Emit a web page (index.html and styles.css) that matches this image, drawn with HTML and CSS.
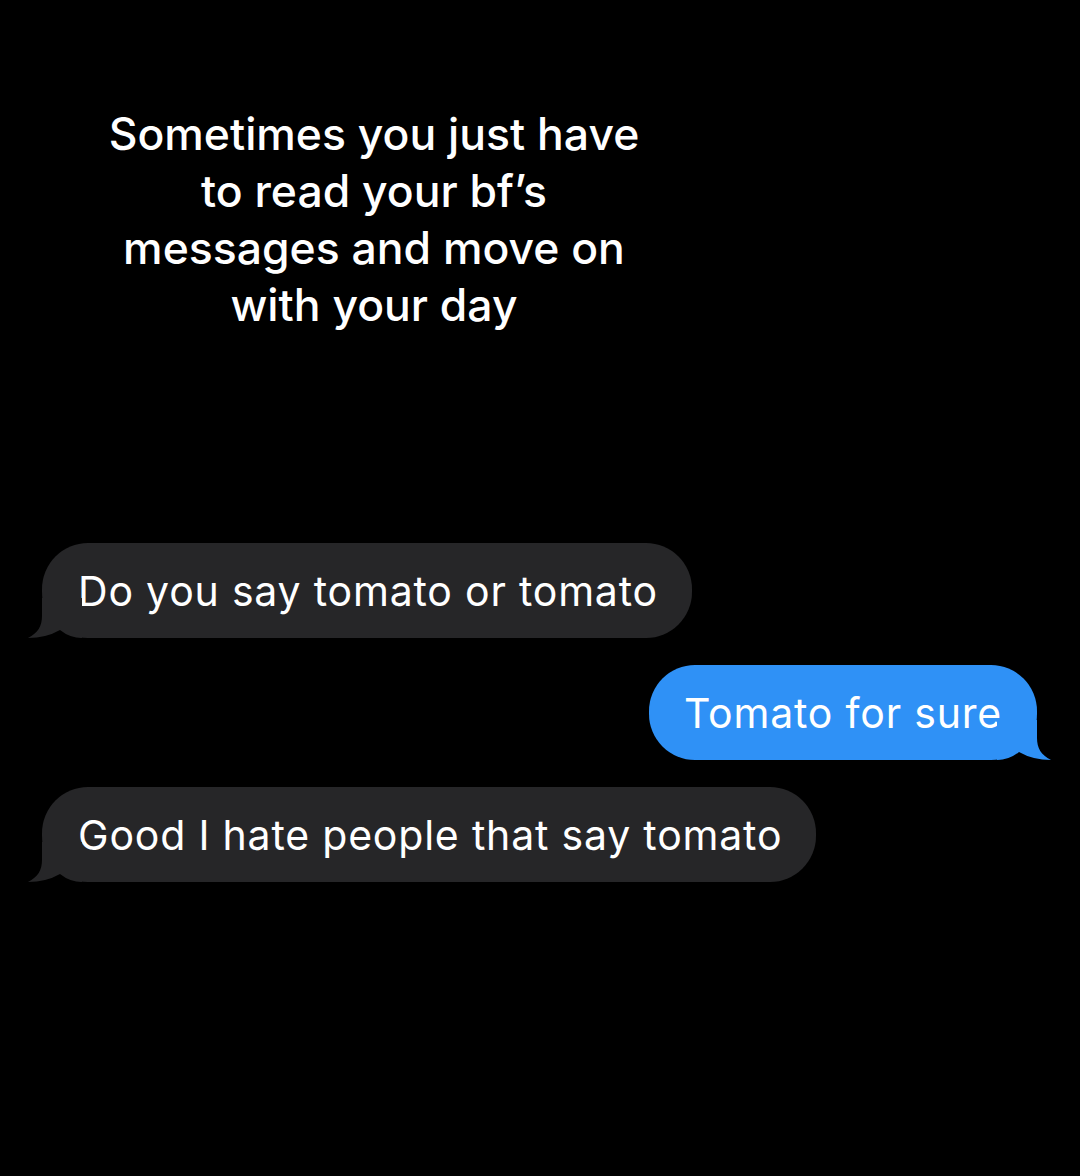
FILE: index.html
```html
<!DOCTYPE html>
<html lang="en">
<head>
  <meta charset="UTF-8">
  <title>Tomato</title>
  <link rel="stylesheet" href="styles.css">
</head>
<body>

<div class="caption">
  Sometimes you just have<br>
  to read your bf’s<br>
  messages and move on<br>
  with your day
</div>

<div class="chat">
  <div class="row">
    <div class="bubble them">
      Do you say tomato or tomato
      <svg class="tail" width="56" height="40" viewBox="0 0 56 40"><path d="M16 0 L16 18 C16 28 12 35 2 40 Q20 40 34 32 Q44 40 56 40 L56 0 Z"/></svg>
    </div>
  </div>
  <div class="row me-row">
    <div class="bubble me">
      Tomato for sure
      <svg class="tail" width="56" height="40" viewBox="0 0 56 40"><path d="M16 0 L16 18 C16 28 12 35 2 40 Q20 40 34 32 Q44 40 56 40 L56 0 Z"/></svg>
    </div>
  </div>
  <div class="row">
    <div class="bubble them">
      Good I hate people that say tomato
      <svg class="tail" width="56" height="40" viewBox="0 0 56 40"><path d="M16 0 L16 18 C16 28 12 35 2 40 Q20 40 34 32 Q44 40 56 40 L56 0 Z"/></svg>
    </div>
  </div>
</div>

</body>
</html>
```

FILE: styles.css
```css
body {
  margin: 0;
  padding: 0;
  background-color: #000;
  color: #fff;
  height: 1176px;
  overflow: hidden;
}

.caption {
  width: 600px;
  margin-left: 74px;
  padding-top: 106px;
  text-align: center;
  font-family: Inter, "Noto Sans", sans-serif;
  font-weight: 500;
  font-size: 44.5px;
  line-height: 57px;
  letter-spacing: 0;
}

.chat {
  margin-top: 209px;
  display: flex;
  flex-direction: column;
  gap: 27px;
  padding: 0 43px 0 42px;
}

.row {
  display: flex;
}

.me-row {
  justify-content: flex-end;
}

.bubble {
  position: relative;
  height: 95px;
  box-sizing: border-box;
  padding: 0 34px 0 36px;
  display: flex;
  align-items: center;
  border-radius: 46px;
  font-family: Inter, "Liberation Sans", sans-serif;
  font-size: 41px;
  letter-spacing: 0.8px;
  color: #fff;
}

.them {
  background-color: #262628;
  fill: #262628;
}

.me {
  background-color: #2f91f6;
  fill: #2f91f6;
  padding: 0 35px;
}

/* tails */
.tail {
  position: absolute;
  bottom: 0;
  left: -16px;
}

.me .tail {
  left: auto;
  right: -16px;
  transform: scaleX(-1);
}
```
